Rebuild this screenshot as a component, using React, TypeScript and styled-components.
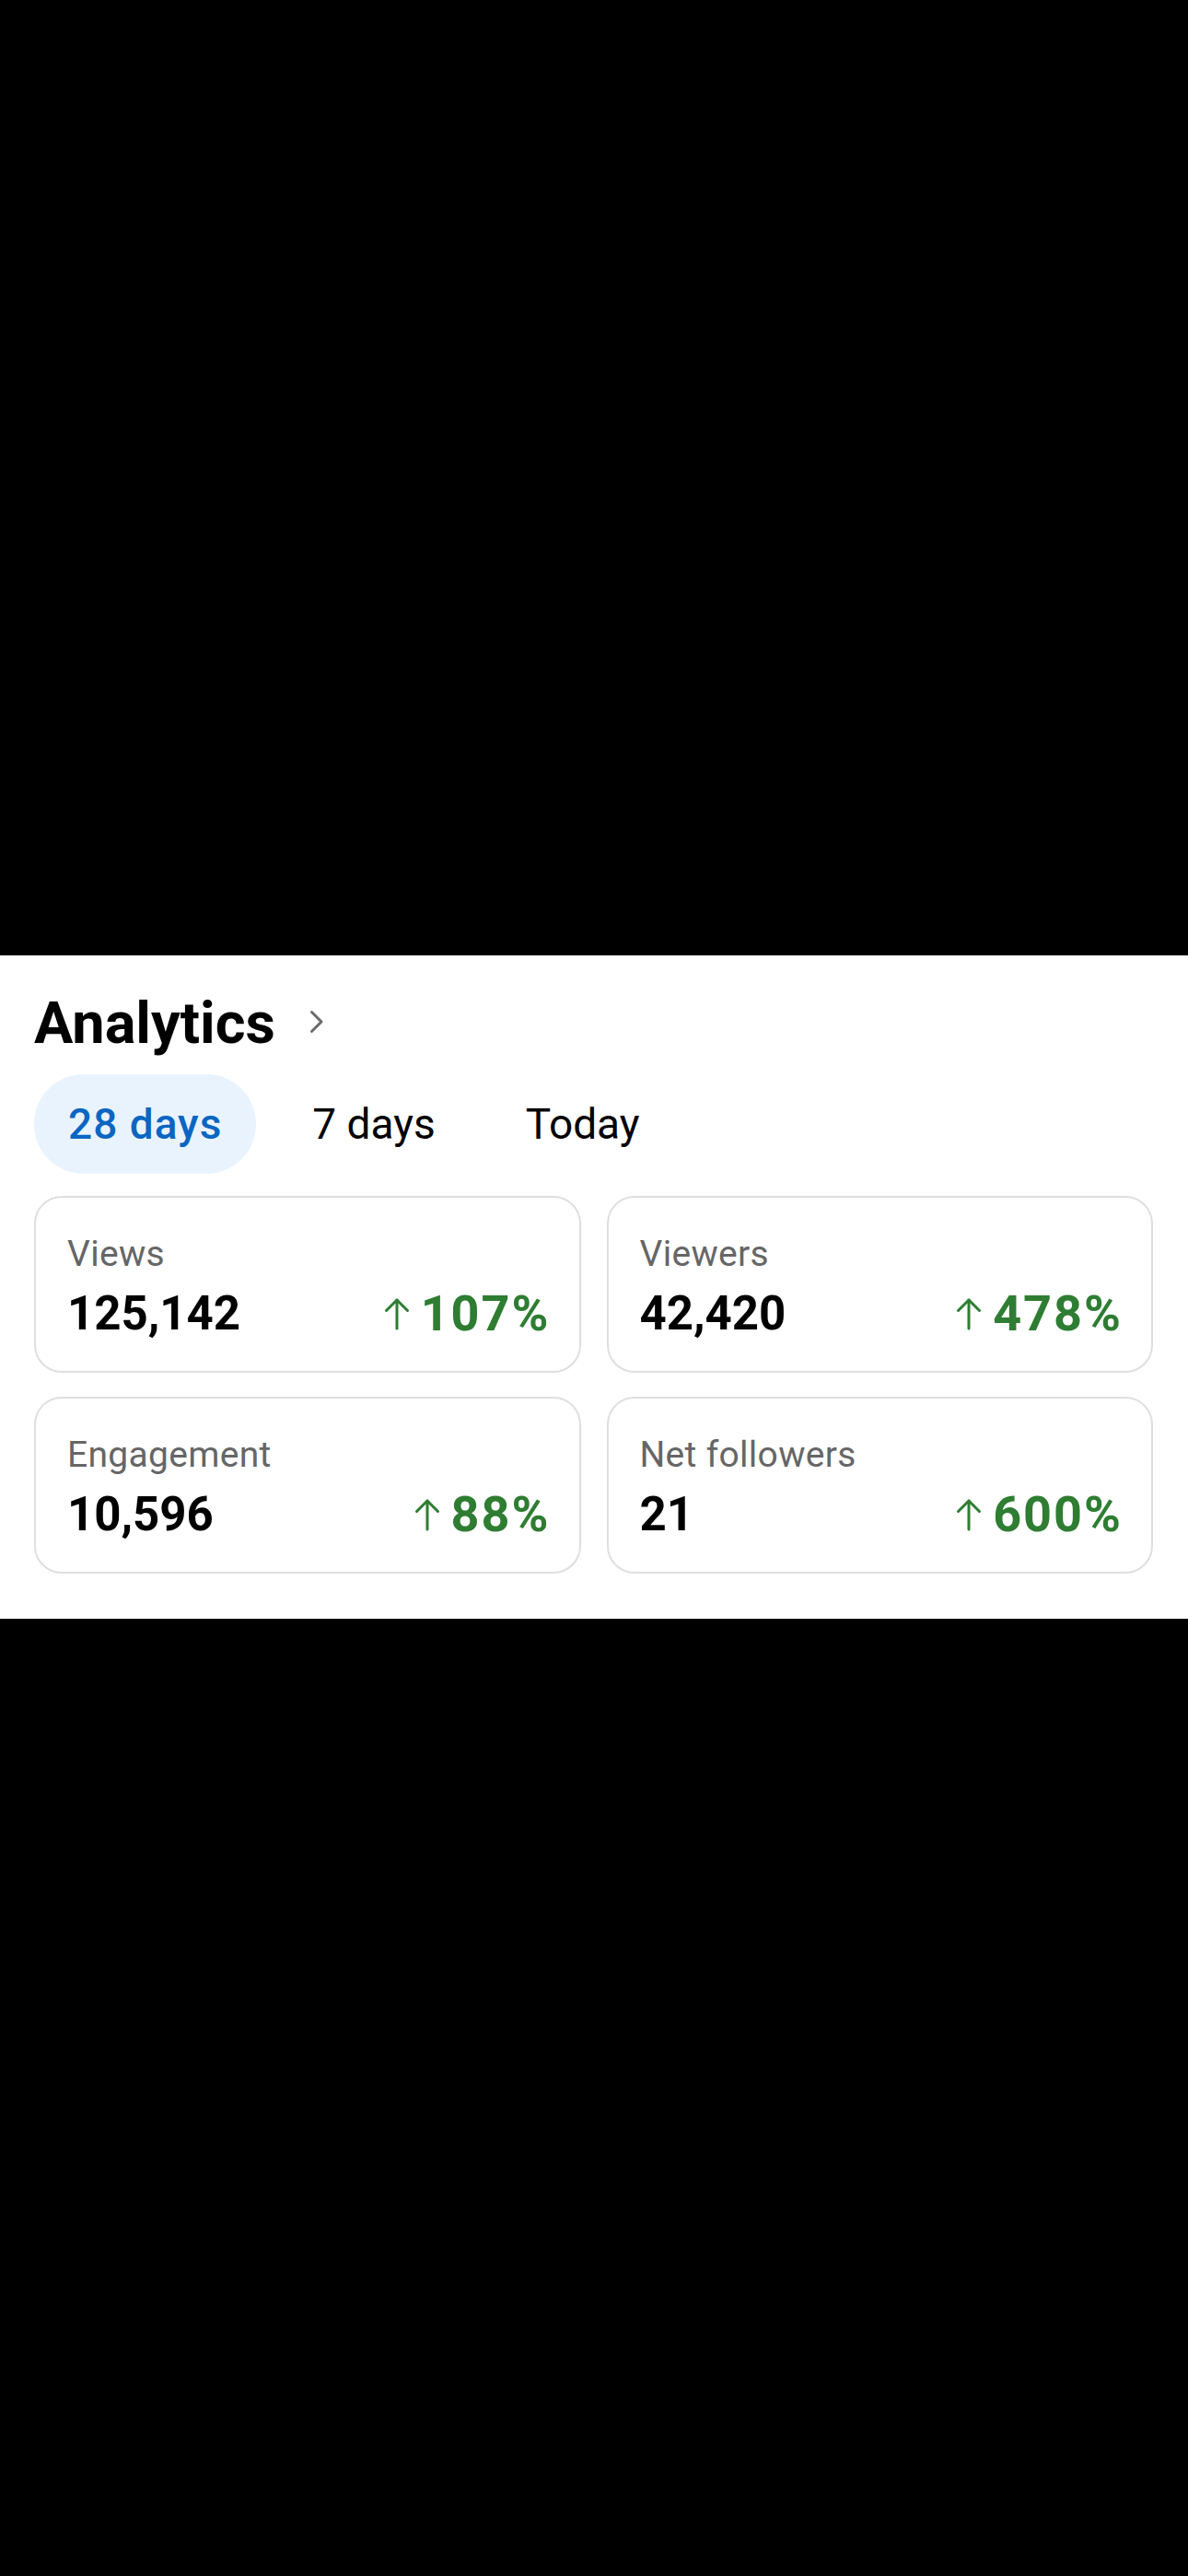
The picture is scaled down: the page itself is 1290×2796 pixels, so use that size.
import styled, { createGlobalStyle } from "styled-components";

const GlobalStyle = createGlobalStyle`
  html, body {
    margin: 0;
    padding: 0;
    background: #000;
  }
  body {
    font-family: Roboto, "Liberation Sans", sans-serif;
  }
`;

const Screen = styled.div`
  display: flex;
  flex-direction: column;
  min-height: 2796px;
  background: #000;
`;

const Spacer = styled.div`
  height: 1037px;
  flex-shrink: 0;
`;

const Panel = styled.section`
  background: #fff;
  padding: 37px 38px 49px 37px;
  display: flex;
  flex-direction: column;
`;

const TitleRow = styled.div`
  display: flex;
  align-items: center;
  gap: 37px;
  height: 74px;
`;

const Title = styled.h2`
  margin: 0;
  font-size: 63px;
  line-height: 74px;
  font-weight: 700;
  color: #000;
`;

const Chevron = styled.svg`
  width: 16px;
  height: 26px;
  margin-top: -4px;
`;

const Tabs = styled.div`
  display: flex;
  gap: 24px;
  margin-top: 18px;
`;

const Tab = styled.button<{ $active?: boolean }>`
  border: 0;
  height: 108px;
  padding: 0 37px;
  border-radius: 54px;
  font-family: inherit;
  font-size: 46px;
  letter-spacing: ${(p) => (p.$active ? "1px" : "0")};
  font-weight: ${(p) => (p.$active ? 500 : 400)};
  color: ${(p) => (p.$active ? "#0a66c2" : "#000")};
  background: ${(p) => (p.$active ? "#e9f3fd" : "transparent")};
  display: flex;
  align-items: center;
`;

const Grid = styled.div`
  display: grid;
  grid-template-columns: 1fr 1fr;
  column-gap: 28px;
  row-gap: 26px;
  margin-top: 24px;
`;

const Card = styled.div`
  height: 192px;
  box-sizing: border-box;
  border: 2px solid #dfdfdf;
  border-radius: 30px;
  padding: 38px 35px 0 34px;
  display: flex;
  flex-direction: column;
`;

const Label = styled.div`
  font-size: 39px;
  line-height: 46px;
  letter-spacing: 0.3px;
  color: #666;
`;

const ValueRow = styled.div`
  display: flex;
  align-items: center;
  justify-content: space-between;
  margin-top: 13px;
  height: 58px;
`;

const Value = styled.div`
  font-size: 51px;
  line-height: 58px;
  font-weight: 700;
  color: #000;
`;

const Change = styled.div`
  display: flex;
  align-items: center;
  gap: 11px;
  margin-right: -4px;
  font-size: 54px;
  line-height: 58px;
  letter-spacing: 2px;
  font-weight: 700;
  color: #2e7d32;
`;

const Arrow = styled.svg`
  width: 30px;
  height: 36px;
`;

const UpArrow = () => (
  <Arrow viewBox="0 0 30 36" fill="none" stroke="#2e7d32" strokeWidth="3" strokeLinecap="round" strokeLinejoin="round">
    <path d="M15 3 V34" />
    <path d="M3.5 14.5 L15 3 L26.5 14.5" />
  </Arrow>
);

const stats = [
  { label: "Views", value: "125,142", change: "107%" },
  { label: "Viewers", value: "42,420", change: "478%" },
  { label: "Engagement", value: "10,596", change: "88%" },
  { label: "Net followers", value: "21", change: "600%" },
];

export default function App() {
  return (
    <Screen>
      <GlobalStyle />
      <Spacer />
      <Panel>
        <TitleRow>
          <Title>Analytics</Title>
          <Chevron viewBox="0 0 16 26" fill="none" stroke="#6b6b6b" strokeWidth="3" strokeLinecap="round" strokeLinejoin="round">
            <path d="M2.5 2.5 L13 13 L2.5 23.5" />
          </Chevron>
        </TitleRow>
        <Tabs>
          <Tab $active>28 days</Tab>
          <Tab>7 days</Tab>
          <Tab>Today</Tab>
        </Tabs>
        <Grid>
          {stats.map((s) => (
            <Card key={s.label}>
              <Label>{s.label}</Label>
              <ValueRow>
                <Value>{s.value}</Value>
                <Change>
                  <UpArrow />
                  {s.change}
                </Change>
              </ValueRow>
            </Card>
          ))}
        </Grid>
      </Panel>
    </Screen>
  );
}
